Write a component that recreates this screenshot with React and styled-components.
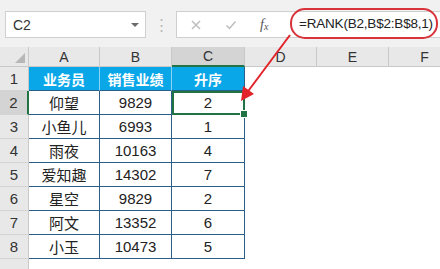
import React from 'react'
import styled, { createGlobalStyle } from 'styled-components'

const Global = createGlobalStyle`
  html, body { margin: 0; padding: 0; background: #fff; }
  body { font-family: "Liberation Sans", "Noto Sans CJK SC", sans-serif; }
`

const rows = [
  ['仰望', '9829', '2'],
  ['小鱼儿', '6993', '1'],
  ['雨夜', '10163', '4'],
  ['爱知趣', '14302', '7'],
  ['星空', '9829', '2'],
  ['阿文', '13352', '6'],
  ['小玉', '10473', '5'],
]

export default function App() {
  return (
    <Page>
      <Global />
      <Toolbar>
        <NameBox>
          <span>C2</span>
          <Caret />
        </NameBox>
        <Grip>⋮</Grip>
        <FormulaBar>
          <Tools>
            <ToolIcon viewBox="0 0 12 12">
              <path d="M2 2 L10 10 M10 2 L2 10" />
            </ToolIcon>
            <ToolIcon viewBox="0 0 12 12">
              <path d="M1.5 6.5 L4.5 9.5 L10.5 2.5" />
            </ToolIcon>
            <Fx>f<sub>x</sub></Fx>
          </Tools>
          <Formula>=RANK(B2,B$2:B$8,1)</Formula>
        </FormulaBar>
      </Toolbar>

      <Sheet>
        <Corner>
          <svg width="10" height="10" viewBox="0 0 10 10">
            <path d="M10 0 L10 10 L0 10 Z" fill="#b7b7b7" />
          </svg>
        </Corner>
        {['A', 'B', 'C', 'D', 'E', 'F'].map(c => (
          <ColHead key={c} active={c === 'C'}>{c}</ColHead>
        ))}

        <RowHead>1</RowHead>
        <Title>业务员</Title>
        <Title>销售业绩</Title>
        <Title last>升序</Title>
        <Empty />
        <Empty />
        <Empty />

        {rows.map((r, i) => (
          <React.Fragment key={i}>
            <RowHead active={i === 0}>{i + 2}</RowHead>
            <Cell>{r[0]}</Cell>
            <Cell>{r[1]}</Cell>
            <Cell last selected={i === 0}>
              {r[2]}
              {i === 0 && <Handle />}
            </Cell>
            <Empty />
            <Empty />
            <Empty />
          </React.Fragment>
        ))}

        <RowHead />
        <Empty />
        <Empty />
        <Empty />
        <Empty />
        <Empty />
        <Empty />
      </Sheet>

      <Arrow width="440" height="269" viewBox="0 0 440 269">
        <line x1="290" y1="35" x2="246" y2="94" stroke="#e2232a" strokeWidth="2" />
        <path d="M241 101 L243 86 L254 94 Z" fill="#e2232a" />
      </Arrow>
    </Page>
  )
}

const Page = styled.div`
  position: relative;
  width: 440px;
  height: 269px;
  overflow: hidden;
  background: #fff;
`

const Toolbar = styled.div`
  display: flex;
  align-items: flex-start;
  height: 47px;
  padding-top: 11px;
  box-sizing: border-box;
  background: #f1f1f1;
`

const NameBox = styled.div`
  display: flex;
  align-items: center;
  justify-content: space-between;
  box-sizing: border-box;
  margin-left: 5px;
  width: 141px;
  height: 27px;
  padding: 0 6px 0 7px;
  background: #fff;
  border: 1px solid #cfcfcf;
  font-size: 14px;
  color: #333;
`

const Caret = styled.span`
  width: 0;
  height: 0;
  border-left: 4px solid transparent;
  border-right: 4px solid transparent;
  border-top: 4px solid #6a6a6a;
`

const Grip = styled.div`
  width: 30px;
  text-align: center;
  line-height: 27px;
  font-size: 15px;
  color: #b9b9b9;
`

const FormulaBar = styled.div`
  display: flex;
  align-items: center;
  flex: 1;
  height: 27px;
  box-sizing: border-box;
  background: #fff;
  border: 1px solid #cfcfcf;
  border-right: none;
`

const Tools = styled.div`
  display: flex;
  align-items: center;
  gap: 23px;
  width: 113px;
  padding-left: 13px;
  box-sizing: border-box;
`

const ToolIcon = styled.svg`
  width: 12px;
  height: 12px;
  fill: none;
  stroke: #bdbdbd;
  stroke-width: 1.5;
`

const Fx = styled.span`
  font-family: "Liberation Serif", serif;
  font-style: italic;
  font-size: 14px;
  color: #555;
  sub { font-size: 10px; vertical-align: -1px; }
`

const Formula = styled.div`
  box-sizing: border-box;
  height: 31px;
  width: 148px;
  margin-top: -2px;
  display: flex;
  align-items: center;
  padding-left: 7px;
  border: 2px solid #d8323a;
  border-radius: 15px;
  font-size: 13.5px;
  color: #222;
  letter-spacing: -0.2px;
`

const Sheet = styled.div`
  display: grid;
  grid-template-columns: 29px 71px 72px 73px 72px 72px 72px;
  grid-template-rows: 20px repeat(9, 24px);
`

const Corner = styled.div`
  display: flex;
  align-items: flex-end;
  justify-content: flex-end;
  padding: 0 3px 3px 0;
  background: #e8e8e8;
  border-right: 1px solid #c9c9c9;
  border-bottom: 1px solid #c9c9c9;
`

const ColHead = styled.div`
  display: flex;
  align-items: center;
  justify-content: center;
  font-size: 14px;
  color: #333;
  background: ${p => (p.active ? '#d4d4d4' : '#e8e8e8')};
  border-right: 1px solid #c9c9c9;
  border-bottom: ${p => (p.active ? '2px solid #217346' : '1px solid #c9c9c9')};
`

const RowHead = styled.div`
  display: flex;
  align-items: center;
  justify-content: center;
  font-size: 15px;
  color: #333;
  background: ${p => (p.active ? '#d4d4d4' : '#e8e8e8')};
  border-right: ${p => (p.active ? '2px solid #217346' : '1px solid #c9c9c9')};
  border-bottom: 1px solid #d4d4d4;
`

const Title = styled.div`
  display: flex;
  align-items: center;
  justify-content: center;
  background: #0aa7e8;
  color: #fff;
  font-family: "Noto Sans CJK SC", sans-serif;
  font-weight: 700;
  font-size: 14px;
  border-right: 1px solid ${p => (p.last ? '#2b5f8a' : '#8fd3f2')};
  border-bottom: 1px solid #2b5f8a;
`

const Cell = styled.div`
  position: relative;
  display: flex;
  align-items: center;
  justify-content: center;
  font-size: 15px;
  color: #222;
  font-family: "Liberation Sans", "Noto Sans CJK SC", sans-serif;
  border-right: 1px solid #2b5f8a;
  border-bottom: 1px solid #2b5f8a;
  ${p => p.selected && `
    outline: 2px solid #217346;
    outline-offset: -2px;
  `}
`

const Handle = styled.span`
  position: absolute;
  right: -4px;
  bottom: -4px;
  width: 6px;
  height: 6px;
  background: #217346;
  border: 1px solid #fff;
  z-index: 2;
`

const Empty = styled.div`
  background: #fff;
`

const Arrow = styled.svg`
  position: absolute;
  left: 0;
  top: 0;
  pointer-events: none;
`
